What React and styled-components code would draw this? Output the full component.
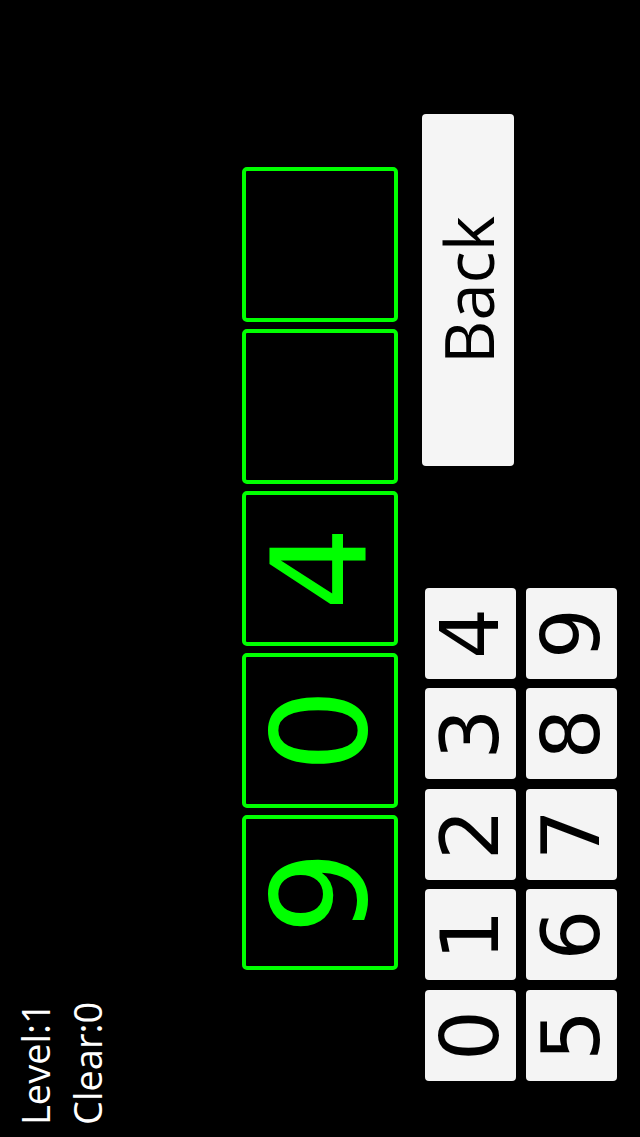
import React from 'react';
import styled, { createGlobalStyle } from 'styled-components';

const GlobalStyle = createGlobalStyle`
  html, body {
    margin: 0;
    padding: 0;
    background: #000;
    overflow: hidden;
  }
`;

// the app is drawn in landscape and turned a quarter to the left
const Screen = styled.div`
  width: 640px;
  height: 1137px;
  overflow: hidden;
  background: #000;
`;

const Stage = styled.div`
  width: 1137px;
  height: 640px;
  box-sizing: border-box;
  transform-origin: 0 0;
  transform: translateY(1137px) rotate(-90deg);
  display: flex;
  flex-direction: column;
  background: #000;
`;

const Header = styled.div`
  height: 242px;
  box-sizing: border-box;
  padding: 9px 0 0 12px;
`;

const StatusLine = styled.div`
  font-family: 'Open Sans', 'Liberation Sans', sans-serif;
  font-size: 38px;
  line-height: 52px;
  color: #fff;
`;

const SlotRow = styled.div`
  display: flex;
  justify-content: center;
  gap: 7px;
`;

const Slot = styled.div`
  width: 155px;
  height: 156px;
  box-sizing: border-box;
  border: 4px solid #00ff00;
  border-radius: 5px;
  display: flex;
  align-items: center;
  justify-content: center;
  font-family: 'DejaVu Sans', sans-serif;
  font-size: 132px;
  line-height: 1;
  color: #00ff00;
`;

const BottomRow = styled.div`
  display: flex;
  align-items: flex-start;
  margin-top: 24px;
  padding-left: 56px;
  gap: 122px;
`;

const Keypad = styled.div`
  display: grid;
  grid-template-columns: repeat(5, 91px);
  grid-auto-rows: 91px;
  column-gap: 9.5px;
  row-gap: 10px;
  margin-top: 3px;
`;

const Key = styled.button`
  border: none;
  padding: 0;
  border-radius: 4px;
  background: #f4f4f4;
  color: #000;
  display: flex;
  align-items: center;
  justify-content: center;
  font-family: 'DejaVu Sans', sans-serif;
  font-size: 80px;
  line-height: 1;
`;

const BackButton = styled.button`
  width: 352px;
  height: 92px;
  border: none;
  padding: 0;
  border-radius: 4px;
  background: #f5f5f5;
  color: #000;
  font-family: 'Open Sans', 'Liberation Sans', sans-serif;
  font-size: 67px;
  line-height: 1;
`;

const slots = ['9', '0', '4', '', ''];
const keys = ['0', '1', '2', '3', '4', '5', '6', '7', '8', '9'];

const App = () => {
  return (
    <Screen>
      <GlobalStyle />
      <Stage>
        <Header>
          <StatusLine>Level:1</StatusLine>
          <StatusLine>Clear:0</StatusLine>
        </Header>
        <SlotRow>
          {slots.map((d, i) => (
            <Slot key={i}>{d}</Slot>
          ))}
        </SlotRow>
        <BottomRow>
          <Keypad>
            {keys.map((k) => (
              <Key key={k} type="button">
                {k}
              </Key>
            ))}
          </Keypad>
          <BackButton type="button">Back</BackButton>
        </BottomRow>
      </Stage>
    </Screen>
  );
};

export default App;
